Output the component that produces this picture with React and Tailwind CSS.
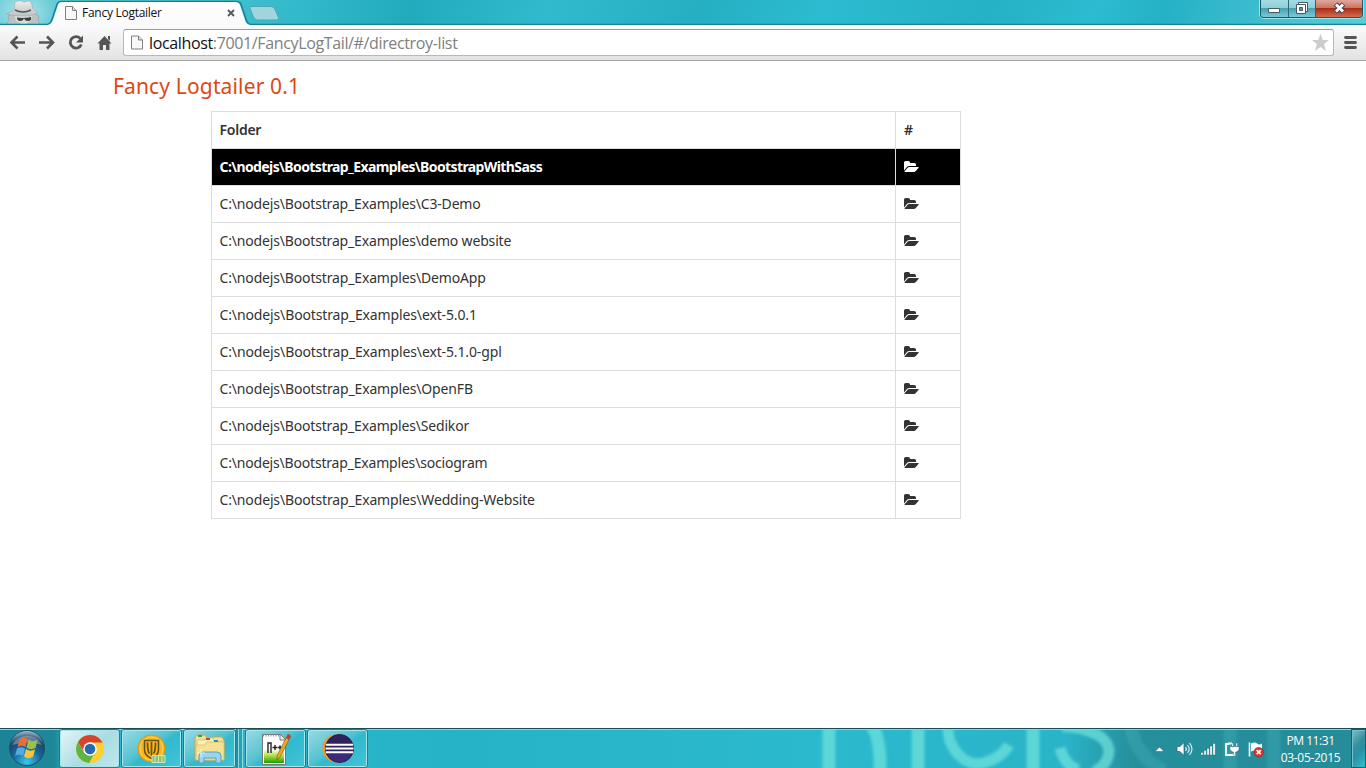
import React from "react";

const rows = [
  ["BootstrapWithSass", "tracking-[-0.6px]"],
  ["C3-Demo", "tracking-[-0.17px]"],
  ["demo website", "tracking-[-0.17px]"],
  ["DemoApp", "tracking-[-0.16px]"],
  ["ext-5.0.1", "tracking-[-0.13px]"],
  ["ext-5.1.0-gpl", "tracking-[-0.13px]"],
  ["OpenFB", "tracking-[-0.15px]"],
  ["Sedikor", "tracking-[-0.17px]"],
  ["sociogram", "tracking-[-0.19px]"],
  ["Wedding-Website", "tracking-[-0.15px]"],
];

function FolderIcon() {
  return (
    <svg className="h-[14px] w-[15px]" viewBox="0 0 1920 1792" fill="currentColor">
      <path d="M1879 952q0 31-31 66l-336 396q-43 51-120.500 86.500t-143.500 35.500h-1088q-34 0-60.500-13t-26.500-43q0-31 31-66l336-396q43-51 120.500-86.500t143.500-35.500h1088q34 0 60.500 13t26.500 43zm-343-344v160h-832q-94 0-197 47.500t-164 119.500l-337 396-5 6q0-4-.5-12.500t-.5-12.500v-960q0-92 66-158t158-66h320q92 0 158 66t66 158v32h544q92 0 158 66t66 158z" />
    </svg>
  );
}

function Page({ className }) {
  return (
    <svg className={className} viewBox="0 0 12 14">
      <path d="M.5.5h7l4 4v9H.5z" fill="#f8f8f8" stroke="#808080" />
      <path d="M7.500.5v4h4" fill="#ddd" stroke="#808080" />
    </svg>
  );
}

function TitleBar() {
  return (
    <header className="relative flex h-[25px] bg-[linear-gradient(110deg,#70ced9_0%,#32b9cb_22%,#22aabd_30%,#31bacd_40%,#26afc3_51%,#2cbbd0_60%,#25b1c6_72%,#2cbbd0_80%,#25b1c6_85%,#5accd9_100%)]">
      <svg className="absolute inset-0" width="1366" height="25">
        <defs>
          <linearGradient id="tab" x2="0" y2="1"><stop stopColor="#fff" /><stop offset="1" stopColor="#fafafa" /></linearGradient>
          <radialGradient id="glow"><stop stopColor="#b4e8ec" stopOpacity=".9" /><stop offset="1" stopColor="#b4e8ec" stopOpacity="0" /></radialGradient>
          <linearGradient id="hat" x2="0" y2="1"><stop stopColor="#eee" /><stop offset="1" stopColor="#bcc1c2" /></linearGradient>
        </defs>
        <ellipse cx="24" cy="12" rx="32" ry="24" fill="url(#glow)" />
        <path d="M6 25l3-5-1-4 6-3h19l6 3-1 4 2 5z" fill="#bcc1c2" stroke="#929a9c" strokeWidth=".6" />
        <path d="M14 14h19l-2 7-7 4-8-4z" fill="#d9dcdc" />
        <path d="M6 14q6-2 8-4l1-8q4-2 6-1l4 1q4-2 6 0l2 7 5 4q-7 4-16 3-9 0-16-2z" fill="url(#hat)" stroke="#a2a8aa" strokeWidth=".6" />
        <path d="M15 10q8 4 16 0" fill="none" stroke="#4e5556" strokeWidth="1.500" />
        <path d="M17 17.500q7 1 14-.5 1 4-3 4-3 0-4-2.500-1 2.500-4 2.500-3 0-3-3.500z" fill="#3a3f40" />
        <path d="M0 24.500h47c3 0 4-2 5-5l5-15q1-3 4-3h175q4 0 5 3l5 15c1 3 2 5 5 5h1115" fill="none" stroke="#158191" strokeWidth="1.500" />
        <path d="M48 25c3-1 4-3 5-5l5-15q1-3 4-3h173q4 0 5 3l5 15c1 3 2 4 5 5z" fill="url(#tab)" />
        <path d="M251 6.500h20q3 0 4 3l3.500 8q1 2.500-2 2.500h-19q-3 0-4-3l-3.500-8.500q-.8-2 1-2z" fill="#a0d5de" stroke="#4aa7b5" />
      </svg>
      <div className="relative ml-[65px] mt-[6px] flex h-[14px] items-center">
        <Page className="h-[14px] w-[12px]" />
        <span className="ml-[5px] w-[142px] whitespace-nowrap font-['Open_Sans',sans-serif] text-[12px] leading-[14px] tracking-[-0.27px] text-[#111]">Fancy Logtailer</span>
        <svg className="ml-[3px] h-[8px] w-[8px]" viewBox="0 0 8 8"><path d="M1 1l6 6M7 1L1 7" stroke="#555" strokeWidth="1.800" /></svg>
      </div>
      <div className="absolute left-[1260px] top-0 flex h-[18px] w-[103px] overflow-hidden rounded-b-[4px] border border-t-0 border-[#195866] shadow-[0_0_0_1px_#9ce3ea]">
        <div className="flex w-[28px] items-center justify-center border-r border-[#286877] bg-[linear-gradient(#a5dce3_0%,#8dcfd8_45%,#48a1b0_50%,#78cbd5_100%)]">
          <svg className="mt-[4px]" width="13" height="6"><path d="M.5.5h11v4H.5z" fill="#fff" stroke="#485966" /></svg>
        </div>
        <div className="flex w-[27px] items-center justify-center border-r border-[#286877] bg-[linear-gradient(#a5dce3_0%,#8dcfd8_45%,#48a1b0_50%,#78cbd5_100%)]">
          <svg className="-mt-[1px]" width="12" height="12"><path d="M2.500.5h9v9h-9z" fill="#fff" stroke="#485966" /><path d="M.5 2.500h9v9h-9z" fill="#fff" stroke="#485966" /><path d="M3.500 5.500h3v3h-3z" fill="#50a3b0" stroke="#485966" /></svg>
        </div>
        <div className="flex flex-1 items-center justify-center bg-[linear-gradient(#dfa99d_0%,#ca7462_45%,#ac2d15_50%,#d06e50_100%)]">
          <svg className="-mt-[2px]" width="13" height="12"><path d="M2.500 2l8 8M10.500 2l-8 8" stroke="#504452" strokeWidth="5" /><path d="M3 2.500l7 7M10 2.500l-7 7" stroke="#fff" strokeWidth="2.800" /></svg>
        </div>
      </div>
    </header>
  );
}

function Toolbar() {
  return (
    <div className="flex h-[36px] items-center border-b border-[#a5a5a5] bg-[linear-gradient(#fbfbfb,#e3e3e3)]">
      <svg width="123" height="35" className="shrink-0" fill="none" stroke="#555" strokeWidth="2.600">
        <path d="M25 17.500H12M17.500 11.500l-6 6 6 6M39 17.500h13M47 11.500l6 6-6 6" />
        <path d="M80.300 13.600a5.700 5.700 0 1 0 1 5.900" strokeWidth="2.800" />
        <path d="M83 10.500v7h-7z" fill="#555" stroke="none" />
        <path d="M97.500 18.500L104.500 11l7 7.500h-2V25h-3.500v-5h-3v5h-3.500v-6.500zM108 11h2v5l-2-2z" fill="#555" stroke="none" />
      </svg>
      <div className="flex h-[27px] w-[1211px] items-center rounded-[3px] border border-t-[#999] border-[#b8b8b8] bg-white">
        <Page className="ml-[7px] h-[15px] w-[12px]" />
        <div className="ml-[6px] whitespace-nowrap font-['Open_Sans',sans-serif] text-[16px] leading-[22px] tracking-[-0.36px] text-[#808080]"><span className="text-[#111]">localhost</span>:7001/FancyLogTail/#/directroy-list</div>
        <svg className="ml-auto mr-[4px]" width="17" height="17" viewBox="0 0 17 17"><path d="M8.500 0l2.300 6H17l-5 4 2 7-5.500-4L3 17l2-7-5-4h6.200z" fill="#ccc" /></svg>
      </div>
      <svg className="ml-[10px]" width="13" height="13"><path d="M1.500 1.500h10M1.500 6.500h10M1.500 11.500h10" stroke="#555" strokeWidth="2.800" strokeLinecap="round" /></svg>
    </div>
  );
}

function FolderTable() {
  return (
    <div className="ml-[211px] mt-[11px] w-[750px] border border-[#ddd] text-[14px] leading-[20px] text-[#333]">
      <div className="flex h-[36px] font-semibold">
        <div className="flex w-[684px] items-center border-r border-[#ddd] pl-[7.500px]"><span className="tracking-[-0.25px]">Folder</span></div>
        <div className="flex items-center pl-[8px]">#</div>
      </div>
      {rows.map(([name, tracking], i) => (
        <div key={name} className={i === 0 ? "flex h-[37px] border-t border-[#ddd] bg-black font-bold text-white" : "flex h-[37px] border-t border-[#ddd]"}>
          <div className="flex w-[684px] items-center border-r border-[#ddd] pl-[7.500px]"><span className={"whitespace-nowrap " + tracking}>{"C:\\nodejs\\Bootstrap_Examples\\" + name}</span></div>
          <div className="flex items-center pl-[8px]"><FolderIcon /></div>
        </div>
      ))}
    </div>
  );
}

function ChromeIcon() {
  return (
    <svg width="30" height="30" viewBox="0 0 30 30">
      <circle cx="15" cy="15" r="14" fill="#fcd033" />
      <path d="M3 8A14 14 0 0 1 27.500 8.500H15L9 18z" fill="#d9422e" />
      <path d="M3 8a14 14 0 0 0 11 21l6-10.500-11 0z" fill="#5fb446" />
      <circle cx="15" cy="15" r="6.800" fill="#fff" />
      <circle cx="15" cy="15" r="5.300" fill="#2469b3" />
    </svg>
  );
}

function SymantecIcon() {
  return (
    <svg width="30" height="30" viewBox="0 0 30 30">
      <circle cx="14.500" cy="14.500" r="13.500" fill="#f8b51c" stroke="#e09411" />
      <circle cx="14.500" cy="14.500" r="11.500" fill="none" stroke="#ffd557" />
      <path d="M7.500 6.500h14v9q0 6-7 9-7-3-7-9z" fill="none" stroke="#645119" strokeWidth="1.500" />
      <path d="M10.500 8.500q0 9 2 11M14.500 8v14M18.500 8.500q0 9-2 11" fill="none" stroke="#645119" strokeWidth="1.700" />
      <path d="M15 21.500h13v7H15z" fill="#8ac36f" stroke="#d0e6bf" />
      <path d="M18 21v8M21.500 21v8M25 21v8" stroke="#d0e6bf" />
    </svg>
  );
}

function ExplorerIcon() {
  return (
    <svg width="34" height="32" viewBox="0 0 34 32">
      <path d="M2 4l2-2h8l2 3h4l2-1h9l2 3v20H2z" fill="#f3df8d" stroke="#c6a750" />
      <path d="M4 7h8l1-2h7l1 4h9v18H5z" fill="#fbefb6" stroke="#d7b968" strokeWidth=".7" />
      <path d="M3 12h9l2-3h17v18H3z" fill="#f5e193" stroke="#d7b968" strokeWidth=".7" />
      <path d="M5 2h4v2H5z" fill="#24a64a" /><path d="M13 5h4v2h-4z" fill="#d84425" /><path d="M21 7h4v2h-4z" fill="#2a89cc" />
      <path d="M6 30v-7q0-4 4-4h14q4 0 4 4v7h-5v-5H11v5z" fill="#9bd4ed" stroke="#4ca3cb" />
      <path d="M8 16v8M4 20h8" stroke="#fff" strokeOpacity=".7" />
    </svg>
  );
}

function NotepadIcon() {
  return (
    <svg width="32" height="34" viewBox="0 0 32 34">
      <defs><linearGradient id="grass" x2="0" y2="1"><stop offset=".4" stopColor="#fff" /><stop offset=".68" stopColor="#b4df42" /><stop offset="1" stopColor="#16a006" /></linearGradient></defs>
      <path d="M2.500 2.500h18l5 5v25h-23z" fill="#fff" stroke="#777" />
      <path d="M4 8h20v23H4z" fill="url(#grass)" />
      <path d="M3 3.500h18" stroke="#8d9494" strokeWidth="2" strokeDasharray="1 1.500" />
      <path d="M20 2v6h6z" fill="#eee" stroke="#777" />
      <path d="M8 21V11h3v10M12.500 15.500h5M15 13v5M18 15.500h4M20 13.500v4" fill="none" stroke="#222" strokeWidth="1.400" />
      <path d="M28 2l3 2-11 21-3 3 0-4z" fill="#f2aa24" stroke="#875a19" strokeWidth=".7" />
      <path d="M28 2l3 2-2 4-3-2z" fill="#b34447" />
    </svg>
  );
}

function EclipseIcon() {
  return (
    <svg width="32" height="30" viewBox="0 0 32 30">
      <circle cx="14.500" cy="14.500" r="14" fill="#f39721" />
      <circle cx="17.500" cy="14.500" r="14" fill="#30215d" stroke="#1c204b" />
      <path d="M5 19h25a13 13 0 0 1-25 0z" fill="#46349a" opacity=".5" />
      <path d="M4 10.800h27M3.500 14.500h28M4 18.200h27" stroke="#fff" strokeWidth="2" />
    </svg>
  );
}

function Task({ children, active }) {
  return (
    <div className={"flex h-[39px] w-[61px] shrink-0 items-center justify-center rounded-[3px] border border-[#1c7f8e] shadow-[inset_0_0_0_1px_#a8e4ea] " + (active ? "bg-[linear-gradient(135deg,#e8f6f8,#a9dce1_55%,#bee9ed)]" : "bg-[linear-gradient(145deg,#9adbe4_0%,#55c2d0_45%,#31b9ce_55%,#42c5d6_100%)]")}>
      {children}
    </div>
  );
}

function Tray() {
  return (
    <svg width="120" height="22" viewBox="0 0 120 22" className="shrink-0">
      <path d="M5 13.500l4.500-4.500 4.500 4.500z" fill="#fff" stroke="#235e69" strokeWidth=".5" />
      <path d="M27 8.500h3l4-4v13l-4-4h-3z" fill="#fff" stroke="#235e69" strokeWidth=".7" />
      <path d="M35.500 9q1.800 2 0 4M37.500 7q3.500 4 0 8M39.500 5q5 6 0 12" fill="none" stroke="#e4f5f6" strokeWidth="1.100" />
      <path d="M51 14.500h2.200v2.500H51zM54 12.500h2.200V17H54zM57 10.500h2.200V17H57zM60 8h2.200v9H60zM63 5.500h2.200V17H63z" fill="#fff" stroke="#246774" strokeWidth=".4" />
      <path d="M79 6h-3v11h8.500v-2.500" fill="none" stroke="#fff" strokeWidth="1.800" />
      <path d="M78 4.500h4v2h-4z" fill="#fff" />
      <path d="M80 8.500h9v3l-2.500 2.500h-1v3h-2v-3h-1L80 11.500zM82 5h1.500v4H82zM86 5h1.500v4H86z" fill="#fff" stroke="#235e69" strokeWidth=".4" />
      <path d="M99.500 4.500v14" stroke="#fff" strokeWidth="1.600" />
      <path d="M101 5.500q4-2 6 0 2 2 5 0v8q-4 2-6 0-2-1.500-5 0z" fill="#fff" />
      <circle cx="108.700" cy="14.200" r="4.800" fill="#d83a30" stroke="#8c2622" strokeWidth=".6" />
      <path d="M106.700 12.200l4 4M110.700 12.200l-4 4" stroke="#fff" strokeWidth="1.700" />
    </svg>
  );
}

function Taskbar() {
  return (
    <footer className="relative flex h-[40px] items-start border-t border-[#174d59] bg-[linear-gradient(90deg,#1d8497_0%,#1e8899_4%,#2cb8ce_5%,#27b3c7_34%,#2bb9ce_60%,#2ab4c8_78%,#268f9c_83%,#258c99_100%)] shadow-[inset_0_1px_0_#86d7df]">
      <svg className="absolute left-[800px] top-[1px]" width="566" height="38">
        <defs><filter id="soft"><feGaussianBlur stdDeviation="1.800" /></filter></defs>
        <g filter="url(#soft)" fill="none" stroke="#75e6dd" strokeWidth="13" opacity=".68">
          <path d="M29-5v50M70-5q11 8 10 50M118-5v50M233-5v50" />
          <path d="M149-12c-6 26 14 50 34 45q17-4 26-18" strokeWidth="11" />
          <path d="M262-4q44 4 47 24 0 14-15 22M260 18q4 16 18 22" strokeWidth="11" />
          <path d="M330-8q4 34 34 49M430-5v50M474-5v50" opacity=".22" />
        </g>
      </svg>
      <div className="relative flex w-[59px] shrink-0 justify-center pt-[1px]">
        <svg width="38" height="38" viewBox="0 0 38 38" className="-ml-[5px]">
          <defs><radialGradient id="orb" cx=".5" cy=".9" r=".9"><stop stopColor="#36c9ed" /><stop offset=".45" stopColor="#17679b" /><stop offset=".75" stopColor="#1c456a" /><stop offset="1" stopColor="#adc7d4" /></radialGradient></defs>
          <circle cx="19" cy="18" r="17.500" fill="url(#orb)" stroke="#1b5169" />
          <path d="M4 15a16 14 0 0 1 30 0q-15-5-30 0z" fill="#fff" opacity=".3" />
          <path d="M11.500 9.500q4-3 8-.5l-2 8q-4-2.500-8 0z" fill="#f06b32" />
          <path d="M20.500 9.500q4 3 9 .5l-2 8q-4.500 2.500-9-.5z" fill="#9ac344" />
          <path d="M9 18.500q4-2.500 8 0l-2 7.500q-4-2.500-8 0z" fill="#55a9e0" />
          <path d="M18 19q4 3 9 .5l-2 7.500q-5 2.500-9-.5z" fill="#fac33b" />
        </svg>
      </div>
      <div className="relative flex">
        <Task active><ChromeIcon /></Task>
        <div className="ml-px flex"><Task><SymantecIcon /></Task></div>
        <div className="ml-px flex h-[39px] w-[53px] shrink-0 items-center justify-center rounded-[3px] border border-[#1c7f8e] bg-[linear-gradient(145deg,#9adbe4_0%,#55c2d0_45%,#31b9ce_55%,#42c5d6_100%)] shadow-[inset_0_0_0_1px_#a8e4ea]"><ExplorerIcon /></div>
        <div className="h-[39px] w-[3px] border-r border-[#8bdbe4] bg-[#248fa0]" />
        <div className="h-[39px] w-[4px] border-r border-[#8bdbe4] bg-[#28a3b5]" />
        <div className="ml-[2px] flex"><Task><NotepadIcon /></Task></div>
        <div className="ml-px flex"><Task><EclipseIcon /></Task></div>
      </div>
      <div className="absolute left-[1150px] top-0 flex h-[39px] items-center">
        <Tray />
        <div className="flex w-[81px] flex-col items-center whitespace-nowrap font-['Open_Sans',sans-serif] text-[12px] leading-[17px] text-white">
          <span className="tracking-[-0.45px]">PM 11:31</span><span className="tracking-[-0.3px]">03-05-2015</span>
        </div>
        <div className="h-[39px] w-[15px] border border-[#185e6d] bg-[linear-gradient(135deg,#80bfc7_0%,#368f9d_40%,#2692a3_60%,#35bed0_100%)] shadow-[inset_1px_1px_0_#74bfc9]" />
      </div>
    </footer>
  );
}

export default function App() {
  return (
    <div className="flex h-[768px] w-[1366px] flex-col overflow-hidden bg-white font-['Noto_Sans',sans-serif]">
      <TitleBar />
      <Toolbar />
      <main className="min-h-0 flex-1">
        <h1 className="ml-[113px] mt-[11px] h-[28px] text-[21px] leading-[28px] tracking-[0.15px] text-[#dd4814]"><span className="whitespace-nowrap">Fancy Logtailer 0.1</span></h1>
        <FolderTable />
      </main>
      <Taskbar />
    </div>
  );
}
